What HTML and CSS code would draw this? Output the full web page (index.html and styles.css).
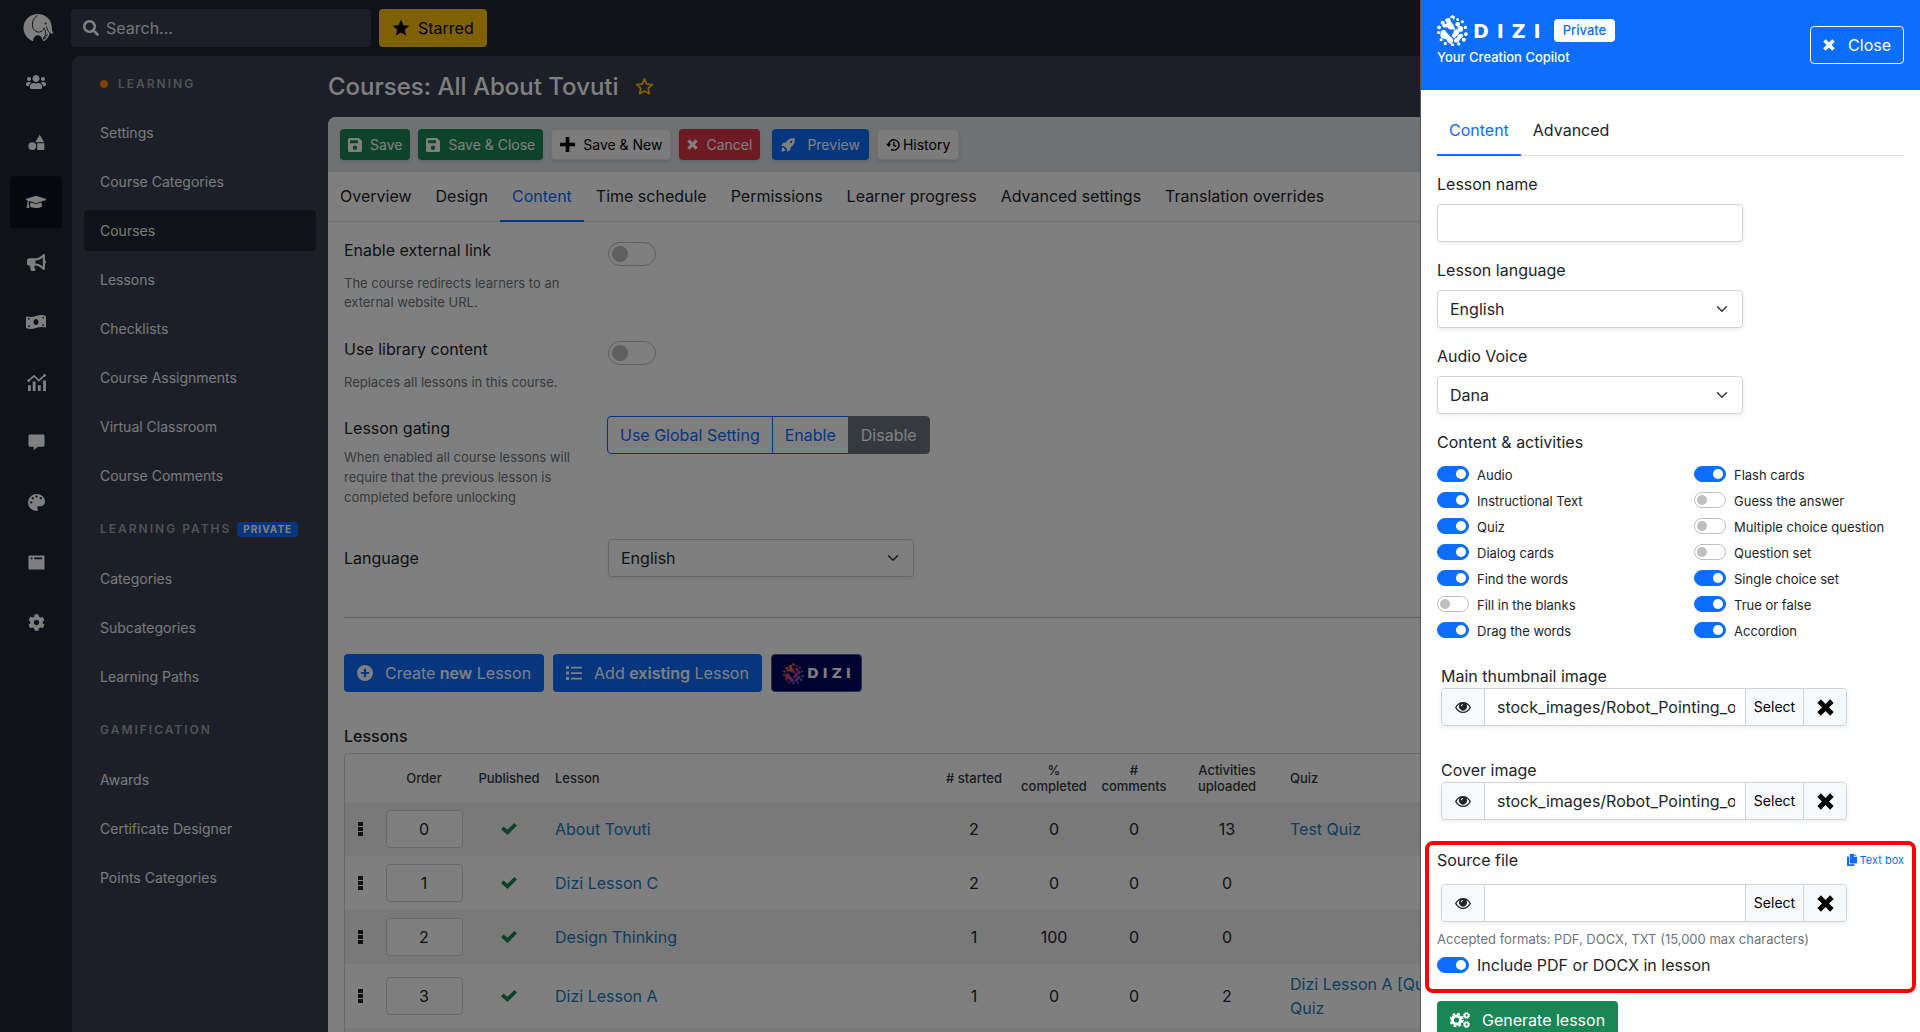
FILE: index.html
```html
<!DOCTYPE html>
<html lang="en">
<head>
<meta charset="utf-8">
<meta name="viewport" content="width=device-width, initial-scale=1">
<title>Courses: All About Tovuti</title>
<link rel="stylesheet" href="styles.css">
</head>
<body>
<svg class="sprite" aria-hidden="true">
  <symbol id="i-search" viewBox="0 0 512 512"><path d="M505 442.7L405.3 343c-4.5-4.5-10.6-7-17-7H372c27.6-35.3 44-79.7 44-128C416 93.1 322.9 0 208 0S0 93.1 0 208s93.1 208 208 208c48.3 0 92.7-16.4 128-44v16.3c0 6.4 2.5 12.5 7 17l99.7 99.7c9.4 9.4 24.6 9.4 33.9 0l28.3-28.3c9.4-9.4 9.4-24.6.1-34zM208 336c-70.7 0-128-57.2-128-128 0-70.7 57.2-128 128-128 70.7 0 128 57.2 128 128 0 70.7-57.2 128-128 128z"/></symbol>
  <symbol id="i-star" viewBox="0 0 24 24"><path d="M12 1l3.2 7.2 7.8.8-5.900 5.200L18.800 22 12 18l-6.800 4 1.700-7.800L1 9l7.800-.8z"/></symbol>
  <symbol id="i-star-o" viewBox="0 0 24 24"><path fill="none" stroke="currentColor" stroke-width="2.200" stroke-linejoin="round" d="M12 2.500l2.900 6.400 6.900.8-5.100 4.700 1.400 6.900L12 17.800l-6.100 3.500 1.400-6.900L2.200 9.700l6.900-.8z"/></symbol>
  <symbol id="i-users" viewBox="0 0 640 512"><path d="M96 224c35.3 0 64-28.7 64-64s-28.7-64-64-64-64 28.7-64 64 28.7 64 64 64zm448 0c35.3 0 64-28.7 64-64s-28.7-64-64-64-64 28.700-64 64 28.700 64 64 64zm32 32h-64c-17.600 0-33.500 7.100-45.100 18.600 40.300 22.100 68.900 62 75.100 109.400h66c17.700 0 32-14.300 32-32v-32c0-35.300-28.700-64-64-64zm-256 0c61.900 0 112-50.100 112-112S381.900 32 320 32 208 82.100 208 144s50.100 112 112 112zm76.800 32h-8.300c-20.800 10-43.900 16-68.500 16s-47.600-6-68.500-16h-8.300C179.600 288 128 339.600 128 403.200V432c0 26.500 21.500 48 48 48h288c26.500 0 48-21.500 48-48v-28.800c0-63.600-51.600-115.200-115.200-115.200zm-223.700-13.400C161.500 263.100 145.600 256 128 256H64c-35.300 0-64 28.700-64 64v32c0 17.700 14.300 32 32 32h65.900c6.300-47.400 34.900-87.300 75.200-109.400z"/></symbol>
  <symbol id="i-shapes" viewBox="0 0 24 24"><circle cx="6" cy="17" r="5.500"/><path d="M16.500 1l6.300 10.500H10.200zM13 13h10v9.500H13z"/></symbol>
  <symbol id="i-cap" viewBox="0 0 640 512"><path d="M622.340 153.200L343.400 67.500c-15.200-4.670-31.600-4.670-46.790 0L17.660 153.200c-23.540 7.230-23.540 38.360 0 45.590l48.630 14.940c-10.670 13.190-17.230 29.280-17.880 46.900C38.780 266.150 32 276.110 32 288c0 10.780 5.680 19.850 13.860 25.650L20.330 428.530C18.110 438.520 25.710 448 35.940 448h56.110c10.240 0 17.840-9.480 15.620-19.470L82.140 313.650C90.320 307.850 96 298.780 96 288c0-11.570-6.470-21.250-15.660-26.870.76-15.020 8.440-28.300 20.690-36.720L296.600 284.500c9.060 2.780 26.440 6.250 46.790 0l278.950-85.700c23.550-7.240 23.550-38.360 0-45.600zM352.790 315.090c-28.530 8.760-52.840 3.920-65.590 0l-145.020-44.550L128 384c0 35.350 85.960 64 192 64s192-28.650 192-64l-14.180-113.470-145.030 44.560z"/></symbol>
  <symbol id="i-horn" viewBox="0 0 576 512"><path d="M576 240c0-23.630-12.950-44.040-32-55.120V32.010C544 23.260 537.020 0 512 0c-7.120 0-14.190 2.380-19.980 7.020l-85.030 68.030C364.280 109.190 310.660 128 256 128H64c-35.350 0-64 28.650-64 64v96c0 35.350 28.650 64 64 64h33.700c-1.390 10.480-2.180 21.140-2.180 32 0 39.770 9.260 77.350 25.560 110.940 5.190 10.690 16.520 17.060 28.400 17.060h74.280c26.050 0 41.690-29.840 25.900-50.560-16.400-21.520-26.150-48.360-26.150-77.440 0-11.110 1.620-21.790 4.410-32H256c54.660 0 108.280 18.810 150.980 52.950l85.030 68.030a32.023 32.023 0 0 0 19.980 7.020c24.920 0 32-22.780 32-32V295.130C563.050 284.040 576 263.630 576 240zm-96 141.420l-33.050-26.440C392.950 311.780 325.120 288 256 288v-96c69.120 0 136.950-23.780 190.950-66.980L480 98.580v282.840z"/></symbol>
  <symbol id="i-money" viewBox="0 0 640 512"><path fill-rule="evenodd" d="M621 54C582 38 543 32 505 32 382 32 258 94 135 94c-31 0-62-4-92-13C20 74 0 90 0 111v317c0 13 7 25 19 30 39 16 77 22 116 22 124 0 247-62 370-62 31 0 62 4 92 13 23 7 43-9 43-30V84c0-13-7-25-19-30zM320 352c-44 0-80-43-80-96s36-96 80-96 80 43 80 96-36 96-80 96zM64 150a28 28 0 1 0 56 0 28 28 0 1 0-56 0zM64 390a28 28 0 1 0 56 0 28 28 0 1 0-56 0zM520 116a28 28 0 1 0 56 0 28 28 0 1 0-56 0zM520 356a28 28 0 1 0 56 0 28 28 0 1 0-56 0z"/></symbol>
  <symbol id="i-chart" viewBox="0 0 20 18"><path d="M1 12h3v6H1zM6 8h3v10H6zM11.500 12h3v6h-3zM17 7h3v11h-3z"/><path fill="none" stroke="currentColor" stroke-width="1.800" d="M1 7.500L7.500 2l5 5L19 1"/><circle cx="1.800" cy="7" r="1.500"/><circle cx="18.500" cy="1.600" r="1.500"/></symbol>
  <symbol id="i-chat" viewBox="0 0 18 17"><path d="M2 0h14a1.500 1.500 0 0 1 1.500 1.500v10A1.500 1.500 0 0 1 16 13h-5.500L6 16.800V13H2A1.500 1.500 0 0 1 .5 11.500v-10A1.500 1.500 0 0 1 2 0z"/></symbol>
  <symbol id="i-palette" viewBox="3 3 18 18"><path fill-rule="evenodd" d="M12 3a9 9 0 0 0 0 18 1.500 1.500 0 0 0 1.100-2.500c-.24-.26-.38-.61-.38-.99A1.500 1.500 0 0 1 14.230 16H16a5 5 0 0 0 5-5c0-4.420-4.030-8-9-8M6.500 13a1.200 1.200 0 1 1 .01 0M8 8.500a1.200 1.200 0 1 1 .01 0M12 6.800a1.200 1.200 0 1 1 .01 0M16.500 8.500a1.200 1.200 0 1 1 .01 0"/></symbol>
  <symbol id="i-window" viewBox="0 0 18 15"><path fill-rule="evenodd" d="M1.500 0h15A1 1 0 0 1 17.500 1v13a1 1 0 0 1-1 1h-15a1 1 0 0 1-1-1V1a1 1 0 0 1 1-1zM3 2.200v1.800h1.800V2.200zM6.500 2.200v1.800H15V2.200z"/></symbol>
  <symbol id="i-cog" viewBox="0 0 512 512"><path d="M487.400 315.700l-42.600-24.600c4.300-23.200 4.300-47 0-70.200l42.600-24.600c4.900-2.800 7.100-8.600 5.500-14-11.100-35.600-30-67.800-54.700-94.600-3.800-4.100-10-5.100-14.800-2.300L380.800 110c-17.900-15.400-38.500-27.300-60.800-35.100V25.800c0-5.600-3.900-10.500-9.400-11.700-36.700-8.200-74.300-7.800-109.200 0-5.500 1.200-9.400 6.100-9.400 11.700V75c-22.200 7.900-42.800 19.800-60.800 35.100L88.700 85.500c-4.900-2.800-11-1.900-14.800 2.300-24.700 26.700-43.600 58.900-54.700 94.600-1.700 5.400.6 11.200 5.500 14L67.300 221c-4.300 23.200-4.300 47 0 70.200l-42.600 24.600c-4.900 2.800-7.100 8.600-5.500 14 11.100 35.600 30 67.800 54.700 94.600 3.800 4.100 10 5.100 14.800 2.300l42.600-24.600c17.900 15.400 38.500 27.300 60.800 35.100v49.200c0 5.600 3.900 10.500 9.400 11.700 36.700 8.200 74.300 7.800 109.200 0 5.500-1.200 9.400-6.100 9.400-11.700v-49.200c22.200-7.900 42.800-19.800 60.800-35.100l42.600 24.600c4.900 2.800 11 1.900 14.800-2.300 24.700-26.700 43.600-58.900 54.700-94.600 1.500-5.500-.7-11.300-5.600-14.100zM256 336c-44.100 0-80-35.900-80-80s35.900-80 80-80 80 35.900 80 80-35.900 80-80 80z"/></symbol>
  <symbol id="i-save" viewBox="0 0 14 14"><path fill-rule="evenodd" d="M1.500 0H11l3 3v9.500a1.500 1.500 0 0 1-1.500 1.500h-11A1.500 1.500 0 0 1 0 12.500v-11A1.500 1.500 0 0 1 1.500 0zM2 2.300v3h8v-3zM7 7.500A2.200 2.200 0 1 0 7 11.900 2.200 2.200 0 1 0 7 7.500z"/></symbol>
  <symbol id="i-plus" viewBox="0 0 14 14"><path d="M5.300 0h3.400v5.300H14v3.400H8.700V14H5.300V8.700H0V5.300h5.300z"/></symbol>
  <symbol id="i-x" viewBox="0 0 14 14"><path d="M3.200.3L7 4.100 10.800.3l2.900 2.900L9.900 7l3.800 3.800-2.900 2.900L7 9.900l-3.800 3.800-2.900-2.900L4.100 7 .3 3.200z"/></symbol>
  <symbol id="i-rocket" viewBox="0 0 16 16"><path fill-rule="evenodd" d="M15.700.3C10.500-.3 7.700 1.500 5.600 5L2.300 5.300.3 9l3.200.1 3.400 3.400.1 3.200 3.700-2 .3-3.300c3.500-2.100 5.300-4.900 4.700-10.100zM11.500 5.800a1.300 1.300 0 1 1 .01 0zM2.600 10.400c-1.500.8-2 2.600-2 5 2.400 0 4.200-.5 5-2l-1-.5-1.300.6.500-1.400z"/></symbol>
  <symbol id="i-history" viewBox="0 0 17 16"><path fill="none" stroke="currentColor" stroke-width="1.700" d="M3.200 8a6.300 6.300 0 1 1 3 5.300M9.500 4v4.500l3 1"/><path d="M0 6.500h6.400L3.200 10.500z"/></symbol>
  <symbol id="i-plus-circle" viewBox="0 0 16 16"><path fill-rule="evenodd" d="M8 0a8 8 0 1 1 0 16A8 8 0 0 1 8 0zM6.900 3.800v3.100H3.800v2.200h3.100v3.100h2.200V9.100h3.100V6.900H9.100V3.800z"/></symbol>
  <symbol id="i-list" viewBox="0 0 16 16"><path d="M0 1h3v3H0zM0 6.500h3v3H0zM0 12h3v3H0zM5 1.700h11v1.700H5zM5 7.200h11v1.700H5zM5 12.700h11v1.700H5z"/></symbol>
  <symbol id="i-grip" viewBox="0 0 5 14"><path d="M0 0h5v4H0zM0 5h5v4H0zM0 10h5v4H0z"/></symbol>
  <symbol id="i-check" viewBox="0 0 16 12"><path d="M13.300 0L16 2.600 6.600 12 0 6.200l2.700-2.600 3.700 3.200z"/></symbol>
  <symbol id="i-eye" viewBox="0 0 16 11"><path fill-rule="evenodd" d="M8 0c3.500 0 6.300 2 8 5.500C14.300 9 11.500 11 8 11S1.700 9 0 5.500C1.700 2 4.500 0 8 0zM4.700 2.300A8 8 0 0 0 1.500 5.500C2.900 8 5.200 9.700 8 9.700s5.100-1.700 6.500-4.200a8 8 0 0 0-3.200-3.200A4 4 0 1 1 4.700 2.300zM7.700 1.900a2.300 2.300 0 0 0-2 2.400h1c0-.8.400-1.300 1.200-1.400z"/></symbol>
  <symbol id="i-copy" viewBox="0 0 10 12"><path d="M3.500 0H7v3h3v6.500H3.500a.8.800 0 0 1-.8-.8V.8a.8.800 0 0 1 .8-.8zM7.700 0L10 2.300H7.700zM0 2.500h2v7.700h5.500V12H.8a.8.800 0 0 1-.8-.8z"/></symbol>
  <symbol id="i-gears" viewBox="0 0 20 16"><path fill="none" stroke="currentColor" stroke-width="3" d="M10.600 8a4.100 4.100 0 1 1-8.200 0 4.100 4.100 0 0 1 8.200 0z"/><path fill="none" stroke="currentColor" stroke-width="2.600" stroke-dasharray="2.600 2.030" d="M12.400 8a5.900 5.900 0 1 1-11.800 0 5.900 5.900 0 0 1 11.800 0z"/><circle cx="16.500" cy="3.500" r="2" fill="none" stroke="currentColor" stroke-width="1.700"/><circle cx="16.500" cy="3.500" r="3" fill="none" stroke="currentColor" stroke-width="1" stroke-dasharray="1.300 1.060"/><circle cx="16.500" cy="12.500" r="2" fill="none" stroke="currentColor" stroke-width="1.700"/><circle cx="16.500" cy="12.500" r="3" fill="none" stroke="currentColor" stroke-width="1" stroke-dasharray="1.300 1.060"/></symbol>
  <symbol id="i-elephant" viewBox="0 0 30 28"><path d="M14.500 0C22 0 28 5.500 28.300 13c.1 2.600.3 5 1.700 6.300-1.300.6-2.800.2-3.600-.6-.5 3-2.700 6-5.400 8.300l-2-.5c-.2-3-2-5-4.400-5.200-2.800-.2-4.600 2-5.200 6C4 25 0 20 0 14 0 6 6.500 0 14.500 0z"/><path class="cut" d="M14 1.500c-4 2.500-5.500 6.500-5 10.500.5 3.800 3.500 6.500 7 6 2.500-.3 4-2 4.500-4M20.500 14c1.500 2 2 4.500 1 7.500l-2.500 5M23 12.500c.8 3 1.500 5 3.500 6.500M24 20l-3 5"/><circle class="eye" cx="22" cy="9.500" r="1"/></symbol>
  <symbol id="i-sphere" viewBox="0 0 30 30">
    <path d="M13 2l2-1.500L17 2l-1 2-1-1.500zM9 4c2-1 3.500-1 3.500.5 0 2 1 3 2.500 4.500s1 4-1 4.500-3-1.500-4.500-2S7 12.500 6 11s.500-2.500 2-2 2.500-.5 1.500-2S7.500 5 9 4zM4 16c1.500-1.500 4-1 4.500.5s2 2 3 3.500 3 2 3.500 4-1 4-3 3-1.500-3-3-4-4.500 0-5-2 0-3 0-5zM17 15c1.500-1.500 4-.5 4 1.500s-1 3-2.500 3.500-1 2.500-2.500 1.500-1-2.500 0-3.500 0-2 1-3zM22 19c2-1 3.500.500 2.500 2s-2.500 1.500-3 3-2.500 3-4 2 0-3 1.500-3.500 1-2.500 3-3.500z"/>
    <circle cx="20" cy="9" r="1.800"/><circle cx="22.500" cy="13.500" r="2.300"/><circle cx="5.500" cy="7.500" r="1.500"/><circle cx="2" cy="12" r="1.300"/><circle cx="1.500" cy="17" r="1"/><circle cx="4" cy="24" r="1"/><circle cx="8" cy="27.500" r="1.100"/><circle cx="15" cy="29" r="1.200"/><circle cx="21" cy="28" r="1.100"/><circle cx="26" cy="24" r="1.400"/><circle cx="28" cy="18.500" r="1.300"/><circle cx="27.500" cy="12" r="1.100"/><circle cx="24.500" cy="6.500" r="1"/><circle cx="20" cy="4.500" r=".9"/><circle cx="16" cy="13" r=".8"/>
  </symbol>
  <linearGradient id="dizi-hues" gradientUnits="userSpaceOnUse" x1="2" y1="2" x2="26" y2="28"><stop offset="0" stop-color="#ff9a2e"/><stop offset=".35" stop-color="#f0503c"/><stop offset=".6" stop-color="#c03a9a"/><stop offset="1" stop-color="#2f8fe8"/></linearGradient>
</svg>

<div class="app">
  <header class="topbar">
    <a class="brand" href="#" aria-label="Home"><svg class="brand-mark"><use href="#i-elephant"/></svg></a>
    <label class="search"><svg class="icon-md"><use href="#i-search"/></svg><input type="text" placeholder="Search..." aria-label="Search"></label>
    <button class="starred" type="button"><svg class="icon-lg"><use href="#i-star"/></svg>Starred</button>
  </header>

  <nav class="rail" aria-label="Sections">
    <a href="#" aria-label="Users"><svg><use href="#i-users"/></svg></a>
    <a href="#" aria-label="Elements"><svg class="small"><use href="#i-shapes"/></svg></a>
    <a href="#" aria-label="Learning" class="active"><svg><use href="#i-cap"/></svg></a>
    <a href="#" aria-label="Marketing"><svg class="wide"><use href="#i-horn"/></svg></a>
    <a href="#" aria-label="Commerce"><svg><use href="#i-money"/></svg></a>
    <a href="#" aria-label="Reports"><svg class="wide"><use href="#i-chart"/></svg></a>
    <a href="#" aria-label="Messages"><svg class="small"><use href="#i-chat"/></svg></a>
    <a href="#" aria-label="Branding"><svg class="small"><use href="#i-palette"/></svg></a>
    <a href="#" aria-label="Pages"><svg class="small"><use href="#i-window"/></svg></a>
    <a href="#" aria-label="Configuration"><svg class="small"><use href="#i-cog"/></svg></a>
  </nav>

  <div class="workspace">
    <nav class="submenu" aria-label="Learning">
      <h2><span class="dot"></span>Learning</h2>
      <a href="#">Settings</a>
      <a href="#">Course Categories</a>
      <a href="#" class="active">Courses</a>
      <a href="#">Lessons</a>
      <a href="#">Checklists</a>
      <a href="#">Course Assignments</a>
      <a href="#">Virtual Classroom</a>
      <a href="#">Course Comments</a>
      <h2>Learning Paths <span class="tag">Private</span></h2>
      <a href="#">Categories</a>
      <a href="#">Subcategories</a>
      <a href="#">Learning Paths</a>
      <h2>Gamification</h2>
      <a href="#">Awards</a>
      <a href="#">Certificate Designer</a>
      <a href="#">Points Categories</a>
    </nav>

    <main class="main">
      <div class="title-row"><h1>Courses: All About Tovuti</h1><svg class="fav"><use href="#i-star-o"/></svg></div>
      <div class="card">
        <div class="toolbar">
          <button class="tool green" type="button"><svg><use href="#i-save"/></svg>Save</button>
          <button class="tool green" type="button"><svg><use href="#i-save"/></svg>Save &amp; Close</button>
          <button class="tool light plus" type="button"><svg><use href="#i-plus"/></svg>Save &amp; New</button>
          <button class="tool red" type="button"><svg><use href="#i-x"/></svg>Cancel</button>
          <button class="tool blue" type="button"><svg><use href="#i-rocket"/></svg>Preview</button>
          <button class="tool light history" type="button"><svg><use href="#i-history"/></svg>History</button>
        </div>
        <nav class="tabs" aria-label="Course">
          <a href="#">Overview</a>
          <a href="#">Design</a>
          <a href="#" class="active">Content</a>
          <a href="#">Time schedule</a>
          <a href="#">Permissions</a>
          <a href="#">Learner progress</a>
          <a href="#">Advanced settings</a>
          <a href="#">Translation overrides</a>
        </nav>
        <div class="card-body">
          <div class="setting">
            <div class="about"><label for="ext">Enable external link</label><p>The course redirects learners to an external website URL.</p></div>
            <input class="switch large" type="checkbox" id="ext">
          </div>
          <div class="setting">
            <div class="about"><label for="lib">Use library content</label><p>Replaces all lessons in this course.</p></div>
            <input class="switch large" type="checkbox" id="lib">
          </div>
          <div class="setting gating">
            <div class="about"><span>Lesson gating</span><p>When enabled all course lessons will require that the previous lesson is completed before unlocking</p></div>
            <div class="segmented" role="group" aria-label="Lesson gating">
              <button type="button">Use Global Setting</button><button type="button">Enable</button><button type="button" class="on">Disable</button>
            </div>
          </div>
          <div class="setting language">
            <div class="about"><label for="lang">Language</label></div>
            <select class="field" id="lang"><option>English</option></select>
          </div>
          <hr>
          <div class="actions">
            <button class="btn primary" type="button"><svg><use href="#i-plus-circle"/></svg><span>Create <b>new</b> Lesson</span></button>
            <button class="btn primary" type="button"><svg><use href="#i-list"/></svg><span>Add <b>existing</b> Lesson</span></button>
            <button class="btn dizi" type="button"><svg class="sphere hued"><use href="#i-sphere"/></svg><span class="wordmark">DIZI</span></button>
          </div>
          <h3>Lessons</h3>
          <table class="lessons">
            <colgroup><col class="c-grip"><col class="c-order"><col class="c-pub"><col class="c-name"><col class="c-num"><col class="c-num"><col class="c-num"><col class="c-act"><col class="c-quiz"><col></colgroup>
            <thead><tr><th></th><th>Order</th><th>Published</th><th class="left">Lesson</th><th># started</th><th>%<br>completed</th><th>#<br>comments</th><th>Activities uploaded</th><th class="left">Quiz</th><th></th></tr></thead>
            <tbody>
              <tr><td><svg class="grip"><use href="#i-grip"/></svg></td><td><input type="text" value="0" aria-label="Order"></td><td><svg class="check"><use href="#i-check"/></svg></td><td class="left"><a href="#">About Tovuti</a></td><td>2</td><td>0</td><td>0</td><td>13</td><td class="left"><a href="#">Test Quiz</a></td><td></td></tr>
              <tr><td><svg class="grip"><use href="#i-grip"/></svg></td><td><input type="text" value="1" aria-label="Order"></td><td><svg class="check"><use href="#i-check"/></svg></td><td class="left"><a href="#">Dizi Lesson C</a></td><td>2</td><td>0</td><td>0</td><td>0</td><td></td><td></td></tr>
              <tr><td><svg class="grip"><use href="#i-grip"/></svg></td><td><input type="text" value="2" aria-label="Order"></td><td><svg class="check"><use href="#i-check"/></svg></td><td class="left"><a href="#">Design Thinking</a></td><td>1</td><td>100</td><td>0</td><td>0</td><td></td><td></td></tr>
              <tr><td><svg class="grip"><use href="#i-grip"/></svg></td><td><input type="text" value="3" aria-label="Order"></td><td><svg class="check"><use href="#i-check"/></svg></td><td class="left"><a href="#">Dizi Lesson A</a></td><td>1</td><td>0</td><td>0</td><td>2</td><td class="left"><a href="#">Dizi Lesson A [Quiz] Quiz</a></td><td></td></tr>
              <tr><td></td><td></td><td></td><td></td><td></td><td></td><td></td><td></td><td></td><td></td></tr>
            </tbody>
          </table>
        </div>
      </div>
    </main>
  </div>
</div>

<div class="backdrop"></div>

<aside class="drawer" aria-label="Dizi">
  <header class="drawer-head">
    <div class="drawer-brand">
      <div class="logo-row"><svg class="sphere"><use href="#i-sphere"/></svg><span class="wordmark">DIZI</span><span class="badge">Private</span></div>
      <div class="tagline">Your Creation Copilot</div>
    </div>
    <button class="close" type="button"><svg><use href="#i-x"/></svg>Close</button>
  </header>
  <form class="drawer-body">
    <nav class="tabs" aria-label="Dizi options"><a href="#" class="active">Content</a><a href="#">Advanced</a></nav>
    <div class="group"><label for="lname">Lesson name</label><input class="field" id="lname" type="text"></div>
    <div class="group"><label for="llang">Lesson language</label><select class="field" id="llang"><option>English</option></select></div>
    <div class="group"><label for="voice">Audio Voice</label><select class="field" id="voice"><option>Dana</option></select></div>
    <fieldset class="activities">
      <legend>Content &amp; activities</legend>
      <div class="switches">
        <label><input class="switch" type="checkbox" checked><span>Audio</span></label>
        <label><input class="switch" type="checkbox" checked><span>Instructional Text</span></label>
        <label><input class="switch" type="checkbox" checked><span>Quiz</span></label>
        <label><input class="switch" type="checkbox" checked><span>Dialog cards</span></label>
        <label><input class="switch" type="checkbox" checked><span>Find the words</span></label>
        <label><input class="switch" type="checkbox"><span>Fill in the blanks</span></label>
        <label><input class="switch" type="checkbox" checked><span>Drag the words</span></label>
        <label><input class="switch" type="checkbox" checked><span>Flash cards</span></label>
        <label><input class="switch" type="checkbox"><span>Guess the answer</span></label>
        <label><input class="switch" type="checkbox"><span>Multiple choice question</span></label>
        <label><input class="switch" type="checkbox"><span>Question set</span></label>
        <label><input class="switch" type="checkbox" checked><span>Single choice set</span></label>
        <label><input class="switch" type="checkbox" checked><span>True or false</span></label>
        <label><input class="switch" type="checkbox" checked><span>Accordion</span></label>
      </div>
    </fieldset>
    <div class="media">
      <label for="thumb">Main thumbnail image</label>
      <div class="picker"><button type="button" class="view" aria-label="Preview"><svg><use href="#i-eye"/></svg></button><input id="thumb" type="text" value="stock_images/Robot_Pointing_on_a_Wall.jpg"><button type="button" class="select">Select</button><button type="button" class="clear" aria-label="Clear"><svg><use href="#i-x"/></svg></button></div>
    </div>
    <div class="media">
      <label for="cover">Cover image</label>
      <div class="picker"><button type="button" class="view" aria-label="Preview"><svg><use href="#i-eye"/></svg></button><input id="cover" type="text" value="stock_images/Robot_Pointing_on_a_Wall.jpg"><button type="button" class="select">Select</button><button type="button" class="clear" aria-label="Clear"><svg><use href="#i-x"/></svg></button></div>
    </div>
    <section class="source">
      <div class="source-head"><label for="src">Source file</label><a href="#"><svg><use href="#i-copy"/></svg>Text box</a></div>
      <div class="picker"><button type="button" class="view" aria-label="Preview"><svg><use href="#i-eye"/></svg></button><input id="src" type="text"><button type="button" class="select">Select</button><button type="button" class="clear" aria-label="Clear"><svg><use href="#i-x"/></svg></button></div>
      <p>Accepted formats: PDF, DOCX, TXT (15,000 max characters)</p>
      <label class="include"><input class="switch" type="checkbox" checked><span>Include PDF or DOCX in lesson</span></label>
    </section>
    <button class="btn generate" type="button"><svg><use href="#i-gears"/></svg>Generate lesson</button>
  </form>
</aside>
</body>
</html>
```
FILE: styles.css
```css
*, *::before, *::after { box-sizing: border-box; }

body {
  margin: 0;
  height: 100vh;
  overflow: hidden;
  background: #1e2533;
  color: #212529;
  font: 400 16px/24px Inter, "Liberation Sans", sans-serif;
}

svg { fill: currentColor; flex: none; }
a { text-decoration: none; color: inherit; }
h1, h2, h3, p { margin: 0; }
button, input, select { font: inherit; color: inherit; }
button { cursor: pointer; }
.sprite { position: absolute; width: 0; height: 0; }

/* Application frame */
.app {
  display: grid;
  grid-template: 56px auto / 72px minmax(0, 1fr);
  grid-template-areas: "top top" "rail work";
  min-height: 100vh;
}

.topbar { grid-area: top; display: flex; align-items: center; gap: 8px; color: #fff; }
.brand { width: 63px; display: flex; padding-left: 23px; }
.brand-mark { width: 31px; height: 28px; }
#i-elephant .cut { fill: none; stroke: #1e2533; stroke-width: 1; }
#i-elephant .eye { fill: #1e2533; }
.search {
  width: 300px;
  height: 38px;
  display: flex;
  align-items: center;
  gap: 7px;
  padding: 0 12px;
  border-radius: 4px;
  background: #383f4e;
}
.search input { width: 100%; border: 0; padding: 0; background: none; }
.search input::placeholder { color: #e8eaee; opacity: 1; }
.icon-md { width: 16px; height: 16px; }
.icon-lg { width: 18px; height: 18px; }
.starred {
  height: 38px;
  display: flex;
  align-items: center;
  gap: 8px;
  padding: 0 13px;
  border: 0;
  border-radius: 4px;
  background: #ffc107;
  color: #000;
}

.rail { grid-area: rail; display: flex; flex-direction: column; align-items: center; gap: 8px; color: #fff; }
.rail a { width: 52px; height: 52px; display: grid; place-items: center; border-radius: 4px; }
.rail a.active { background: #0b111e; }
.rail svg { width: 20px; height: 16px; }
.rail svg.wide { width: 19px; height: 17px; }
.rail svg.small { width: 17px; height: 17px; }

.workspace {
  grid-area: work;
  display: flex;
  border-top-left-radius: 8px;
  background: #383f4e;
}

.submenu {
  flex: 0 0 256px;
  padding: 14px 12px;
  display: flex;
  flex-direction: column;
  gap: 8px;
  color: #f1f2f4;
  font-size: 14px;
}
.submenu a { padding: 8px 16px; line-height: 25px; border-radius: 4px; }
.submenu a.active { background: #1e2533; }
.submenu h2 {
  display: flex;
  align-items: center;
  height: 42px;
  margin-top: 4px;
  padding: 0 16px;
  font-size: 12px;
  font-weight: 600;
  letter-spacing: 2px;
  text-transform: uppercase;
  color: #a0a5ac;
}
.submenu h2:first-child { height: 28px; margin: 0 0 6px; }
.dot { width: 8px; height: 8px; margin-right: 10px; border-radius: 50%; background: #fd7e14; }
.tag {
  margin-left: 6px;
  padding: 0 6px;
  border-radius: 4px;
  background: #0d6efd;
  color: #fff;
  font-size: 10px;
  font-weight: 700;
  line-height: 15px;
  letter-spacing: 1px;
}

.main { flex: 1; min-width: 0; padding-right: 12px; }
.title-row { height: 61px; display: flex; align-items: center; gap: 16px; }
h1 { color: #fff; font-size: 24px; line-height: 32px; font-weight: 500; }
.fav { width: 19px; height: 19px; color: #ffc107; }

.card { background: #fff; border-radius: 8px 8px 0 0; }
.toolbar {
  display: flex;
  gap: 8px;
  padding: 12px;
  border-radius: 8px 8px 0 0;
  background: #e0e3e6;
}
.tool {
  height: 31px;
  display: flex;
  align-items: center;
  gap: 8px;
  padding: 0 8px;
  border: 0;
  border-radius: 4px;
  font-size: 14px;
  box-shadow: 0 2px 4px rgba(0, 0, 0, .12);
}
.tool svg { width: 14px; height: 14px; }
.tool.green { background: #198754; color: #fff; }
.tool.red { background: #dc3545; color: #fff; margin-right: 4px; }
.tool.red svg { width: 11px; height: 11px; }
.tool.blue { background: #0d6efd; color: #fff; padding: 0 9px; gap: 12px; }
.tool.light { background: #f8f9fa; border: 1px solid #dee2e6; color: #000; }
.tool.plus svg { width: 15px; height: 15px; }
.tool.history { gap: 3px; padding: 0 8px; }

.tabs { display: flex; border-bottom: 1px solid #dee2e6; }
.tabs a { padding: 12px 12px 14px; margin-bottom: -1px; line-height: 24px; }
.tabs a.active { color: #0d6efd; box-shadow: inset 0 -2px #0d6efd; }

.card-body { padding: 16px; }
.setting { display: flex; align-items: flex-start; gap: 28px; padding-bottom: 25px; }
.about { width: 236px; }
.about p { margin-top: 12px; color: #6c757d; font-size: 13px; line-height: 19px; }
.setting .switch { margin-top: 4px; }
.setting + .setting { padding-bottom: 24px; }
.setting.gating { padding-bottom: 32px; }
.setting.gating .about p { margin-top: 7px; line-height: 20px; }
.setting.language { align-items: center; padding-bottom: 40px; }

.switch {
  appearance: none;
  flex: none;
  display: flex;
  align-items: center;
  width: 32px;
  height: 16px;
  margin: 0;
  padding: 2px;
  border: 1px solid #bfbfbf;
  border-radius: 16px;
  background: #fff;
}
.switch::before { content: ""; width: 10px; height: 10px; border-radius: 50%; background: #bfbfbf; }
.switch:checked { justify-content: flex-end; border-color: #0d6efd; background: #0d6efd; }
.switch:checked::before { background: #fff; }
.switch.large { width: 48px; height: 24px; padding: 3px; }
.switch.large::before { width: 16px; height: 16px; }

.segmented { display: flex; }
.segmented button {
  height: 38px;
  padding: 0 12px;
  border: 1px solid #0d6efd;
  margin-left: -1px;
  background: none;
  color: #0d6efd;
}
.segmented button:first-child { border-radius: 4px 0 0 4px; }
.segmented button:last-child { border-radius: 0 4px 4px 0; }
.segmented .on { background: #6c757d; border-color: #6c757d; color: #fff; }

.field {
  width: 306px;
  height: 38px;
  padding: 0 12px;
  border: 1px solid #ced4da;
  border-radius: 4px;
  background: #fff;
  box-shadow: 0 2px 4px rgba(0, 0, 0, .07);
}
select.field {
  appearance: none;
  background: #fff url("data:image/svg+xml,%3Csvg xmlns='http://www.w3.org/2000/svg' viewBox='0 0 16 16'%3E%3Cpath fill='none' stroke='%23343a40' stroke-width='2' stroke-linecap='round' stroke-linejoin='round' d='M2 5l6 6 6-6'/%3E%3C/svg%3E") no-repeat right 14px center / 12px;
}

hr { margin: 0; border: 0; border-top: 1px solid #bcbfc2; }
.actions { display: flex; gap: 9px; padding: 36px 0 32px; }
.btn {
  height: 38px;
  display: flex;
  align-items: center;
  gap: 12px;
  padding: 0 13px;
  border: 0;
  border-radius: 4px;
  color: #fff;
}
.btn svg { width: 16px; height: 16px; }
.btn.primary { background: #0d6efd; }
.btn b { font-weight: 600; }
.btn.dizi { gap: 3px; padding: 0 6px 0 11px; background: #00075e; border: 1px solid #46639c; }
.btn.dizi svg { width: 21px; height: 21px; }
.sphere { stroke: currentColor; stroke-width: 1; }
.hued { fill: url(#dizi-hues); stroke: url(#dizi-hues); }
.wordmark { font-family: "DejaVu Sans", sans-serif; font-weight: 700; font-size: 14px; letter-spacing: 4px; }

h3 { font-size: 16px; line-height: 24px; font-weight: 500; }

.lessons {
  width: 100%;
  margin-top: 5px;
  table-layout: fixed;
  border-collapse: separate;
  border-spacing: 0;
  border: 1px solid #ced4da;
  border-radius: 4px 4px 0 0;
}
.c-grip { width: 30px; }
.c-order { width: 98px; }
.c-pub { width: 72px; }
.c-name { width: 389px; }
.c-num { width: 80px; }
.c-act { width: 106px; }
.c-quiz { width: 180px; }
.lessons th, .lessons td { padding: 7px 8px; text-align: center; vertical-align: middle; }
.lessons th { height: 48px; padding: 0 4px; font-size: 13px; line-height: 16px; font-weight: 500; color: #32383e; }
.lessons td { height: 54px; }
.lessons .left, .lessons th.left { padding-left: 10px; text-align: left; }
.lessons tbody tr:nth-child(odd) { background: #f2f2f2; }
.lessons a { color: #1a7bbd; }
.lessons tbody tr:nth-child(4) td { height: 64px; }
.lessons input {
  display: block;
  width: 77px;
  height: 38px;
  margin: 0 auto;
  border: 1px solid #ced4da;
  border-radius: 4px;
  background: #fff;
  text-align: center;
}
.grip { display: block; width: 5px; height: 14px; margin: 0 auto; }
.check { width: 16px; height: 12px; color: #198754; }

/* Dizi drawer */
.backdrop { position: fixed; inset: 0; background: rgba(0, 0, 0, .5); }
.drawer {
  position: fixed;
  inset: 0 0 0 auto;
  width: 500px;
  max-width: 100%;
  overflow-y: auto;
  scrollbar-width: none;
  border-left: 1px solid #555;
  background: #fff;
}
.drawer-head {
  display: flex;
  justify-content: space-between;
  align-items: flex-start;
  height: 90px;
  padding: 15px 16px;
  background: #0d6efd;
  color: #fff;
}
.logo-row { display: flex; align-items: center; height: 31px; gap: 5px; }
.logo-row .sphere { width: 31px; height: 31px; }
.logo-row .wordmark { font-size: 19px; letter-spacing: 8px; }
.badge {
  padding: 0 9px;
  border-radius: 4px;
  background: #fff;
  color: #0d6efd;
  font-size: 13px;
  line-height: 23px;
  font-weight: 500;
}
.tagline { font-size: 13px; line-height: 22px; font-weight: 500; }
.close {
  height: 38px;
  margin-top: 11px;
  display: flex;
  align-items: center;
  gap: 13px;
  padding: 0 12px;
  border: 1px solid #fff;
  border-radius: 4px;
  background: none;
  color: #fff;
}
.close svg { width: 12px; height: 12px; }

.drawer-body { padding: 16px; }
.drawer .tabs { margin-bottom: 16px; }
.group { display: flex; flex-direction: column; gap: 8px; margin-bottom: 16px; }
.activities { margin: 0 0 19px; padding: 0; border: 0; min-width: 0; }
legend { padding: 0; margin-bottom: 9px; }
.switches { display: grid; grid-template: repeat(7, 26px) / 257px 1fr; grid-auto-flow: column; }
.switches label { display: flex; align-items: flex-start; gap: 8px; font-size: 13px; line-height: 24px; }
.switches .switch { margin-top: 3px; }

.media { padding-left: 4px; margin-bottom: 32px; }
.media label { display: block; }
.picker { display: flex; width: 406px; height: 38px; border: 1px solid #ced4da; border-radius: 4px; box-shadow: 0 2px 4px rgba(0, 0, 0, .07); }
.picker > * { border: 0; border-right: 1px solid #ced4da; }
.picker > :last-child { border-right: 0; }
.picker button { display: grid; place-items: center; padding: 0; background: #f8f9fa; }
.picker input { flex: 1; min-width: 0; padding: 0 10px 0 12px; background: none; }
.picker .view { width: 43px; border-radius: 4px 0 0 4px; }
.picker .view svg { width: 16px; height: 11px; }
.picker .select { width: 58px; font-size: 14px; color: #000; }
.picker .clear { width: 42px; color: #000; border-radius: 0 4px 4px 0; }
.picker .clear svg { width: 17px; height: 17px; }

.source { margin: -11px -12px 8px; padding: 3px 8px 10px; border: 4px solid #f00; border-radius: 8px; }
.source-head { display: flex; justify-content: space-between; align-items: baseline; line-height: 24px; }
.source-head a { display: flex; align-items: center; gap: 3px; font-size: 11px; color: #0d6efd; }
.source-head svg { width: 10px; height: 12px; }
.source .picker { margin: 12px 0 6px 4px; }
.source p { color: #6c757d; font-size: 13px; line-height: 22px; }
.include { display: flex; align-items: center; gap: 8px; height: 29px; }
.btn.generate { background: #198754; }
.btn.generate svg { width: 20px; height: 16px; }
```
